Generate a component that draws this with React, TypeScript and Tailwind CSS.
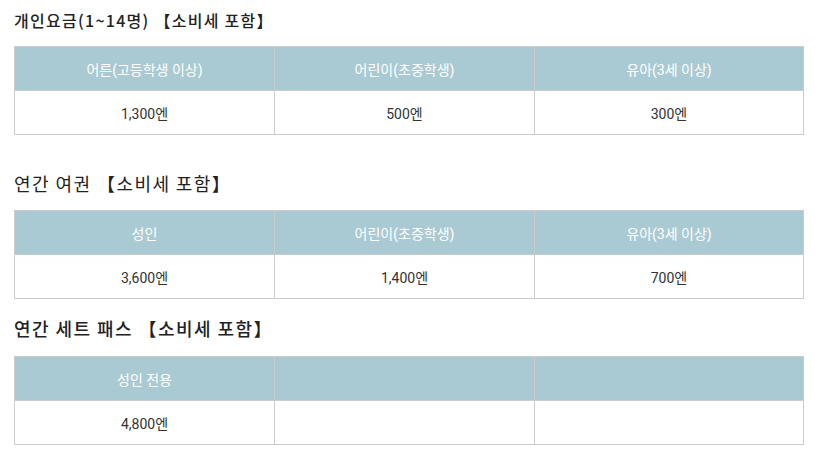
import React from "react";

type Sec = { title: string; heads: string[]; vals: string[]; box: string; h: string };

const sections: Sec[] = [
  { title: "개인요금(1~14명) 【소비세 포함】", heads: ["어른(고등학생 이상)", "어린이(초중학생)", "유아(3세 이상)"], vals: ["1,300엔", "500엔", "300엔"], box: "mt-[8px] mb-[14px]", h: "h-[24px] leading-[24px] text-[16px] font-medium tracking-[0.08em]" },
  { title: "연간 여권 【소비세 포함】", heads: ["성인", "어린이(초중학생)", "유아(3세 이상)"], vals: ["3,600엔", "1,400엔", "700엔"], box: "mt-[35px] mb-[14px]", h: "h-[26px] leading-[26px] text-[18px] font-normal tracking-[0.08em]" },
  { title: "연간 세트 패스 【소비세 포함】", heads: ["성인 전용", "", ""], vals: ["4,800엔", "", ""], box: "mt-[16px] mb-[15px]", h: "h-[26px] leading-[26px] text-[18px] font-medium tracking-[0.08em]" },
];

export default function App() {
  return (
    <div className="w-[815px] h-[459px] bg-white px-[14px] overflow-hidden">
      {sections.map((s, i) => (
        <div key={i}>
          <h2
            className={`${s.h} ${s.box} text-[#222] whitespace-nowrap`}
            style={{ fontFamily: "'Noto Sans CJK KR', 'Noto Sans', sans-serif" }}
          >
            {s.title}
          </h2>
          <table
            className="w-[790px] border-collapse table-fixed"
            style={{ fontFamily: "Roboto, 'Noto Sans CJK KR', sans-serif" }}
          >
            <colgroup>
              <col className="w-[260px]" />
              <col className="w-[260px]" />
              <col />
            </colgroup>
            <tbody>
              <tr className="h-[44px]">
                {s.heads.map((h, j) => (
                  <td key={j} className="border border-[#cccccc] bg-[#aacad3] text-white text-[14px] text-center align-middle pt-[3px]">
                    {h}
                  </td>
                ))}
              </tr>
              <tr className="h-[44px]">
                {s.vals.map((v, j) => (
                  <td key={j} className="border border-[#cccccc] bg-white text-[#333] text-[14px] text-center align-middle pt-[3px]">
                    {v}
                  </td>
                ))}
              </tr>
            </tbody>
          </table>
        </div>
      ))}
    </div>
  );
}
